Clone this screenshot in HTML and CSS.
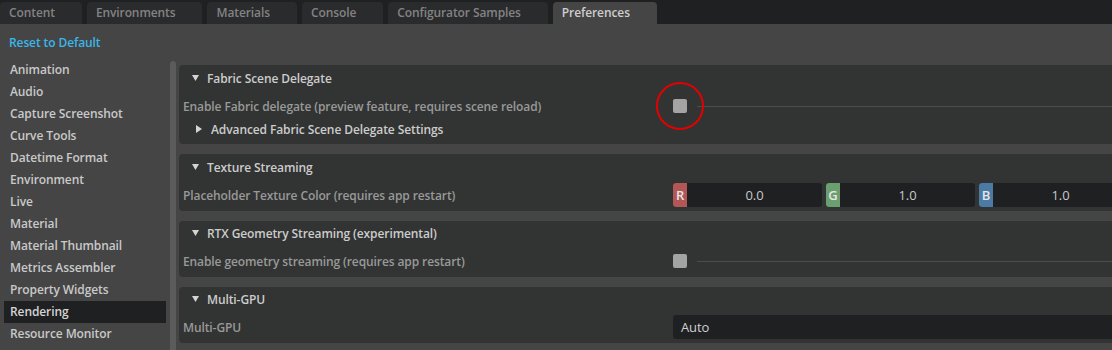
FILE: index.html
```html
<!DOCTYPE html>
<html>
<head>
<meta charset="utf-8">
<link rel="stylesheet" href="styles.css">
</head>
<body>
<div class="window">
  <div class="tabbar">
    <div class="tab">Content</div>
    <div class="tab">Environments</div>
    <div class="tab">Materials</div>
    <div class="tab">Console</div>
    <div class="tab">Configurator Samples</div>
    <div class="tab active">Preferences</div>
  </div>
  <div class="main">
    <div class="reset-bar"><span class="reset">Reset to Default</span></div>
    <div class="body">
      <ul class="pages">
        <li>Animation</li>
        <li>Audio</li>
        <li>Capture Screenshot</li>
        <li>Curve Tools</li>
        <li>Datetime Format</li>
        <li>Environment</li>
        <li>Live</li>
        <li>Material</li>
        <li>Material Thumbnail</li>
        <li>Metrics Assembler</li>
        <li>Property Widgets</li>
        <li class="selected">Rendering</li>
        <li>Resource Monitor</li>
      </ul>
      <div class="scrollbar"></div>
      <div class="content">
        <section class="frame">
          <div class="frame-header">
            <svg class="tri-down" width="7" height="6" viewBox="0 0 7 6"><polygon points="0,0 7,0 3.5,6" fill="#d4d4d4"/></svg>
            <span>Fabric Scene Delegate</span>
          </div>
          <div class="row">
            <span class="label">Enable Fabric delegate (preview feature, requires scene reload)</span>
            <div class="check-wrap">
              <span class="checkbox"></span>
              <span class="highlight"></span>
            </div>
            <span class="check-line"></span>
          </div>
          <div class="sub-header">
            <svg class="tri-right" width="6" height="8" viewBox="0 0 6 8"><polygon points="0,0 6,4 0,8" fill="#d4d4d4"/></svg>
            <span>Advanced Fabric Scene Delegate Settings</span>
          </div>
        </section>

        <section class="frame">
          <div class="frame-header">
            <svg class="tri-down" width="7" height="6" viewBox="0 0 7 6"><polygon points="0,0 7,0 3.5,6" fill="#d4d4d4"/></svg>
            <span>Texture Streaming</span>
          </div>
          <div class="row">
            <span class="label">Placeholder Texture Color (requires app restart)</span>
            <div class="color-fields">
              <div class="cfield"><span class="chan chan-r">R</span><span class="cval">0.0</span></div>
              <div class="cfield"><span class="chan chan-g">G</span><span class="cval">1.0</span></div>
              <div class="cfield"><span class="chan chan-b">B</span><span class="cval">1.0</span></div>
            </div>
          </div>
        </section>

        <section class="frame tight">
          <div class="frame-header">
            <svg class="tri-down" width="7" height="6" viewBox="0 0 7 6"><polygon points="0,0 7,0 3.5,6" fill="#d4d4d4"/></svg>
            <span>RTX Geometry Streaming (experimental)</span>
          </div>
          <div class="row">
            <span class="label">Enable geometry streaming (requires app restart)</span>
            <div class="check-wrap"><span class="checkbox"></span></div>
            <span class="check-line"></span>
          </div>
        </section>

        <section class="frame tight">
          <div class="frame-header">
            <svg class="tri-down" width="7" height="6" viewBox="0 0 7 6"><polygon points="0,0 7,0 3.5,6" fill="#d4d4d4"/></svg>
            <span>Multi-GPU</span>
          </div>
          <div class="row">
            <span class="label">Multi-GPU</span>
            <div class="combo">Auto</div>
          </div>
        </section>
      </div>
    </div>
  </div>
</div>
</body>
</html>
```

FILE: styles.css
```css
* { box-sizing: border-box; }

html, body {
  margin: 0;
  padding: 0;
  background: #454545;
  overflow: hidden;
}

body {
  width: 1112px;
  height: 350px;
  font-family: "Open Sans", "Noto Sans", sans-serif;
  font-weight: 600;
  font-size: 12px;
  letter-spacing: -0.1px;
}

.window {
  width: 1112px;
  height: 350px;
  overflow: hidden;
  display: flex;
  flex-direction: column;
}

.tabbar {
  height: 24px;
  background: #1f2022;
  display: flex;
  align-items: flex-end;
  gap: 5px;
  flex: none;
}

.tab {
  height: 22px;
  line-height: 22px;
  padding: 0 27px 0 9px;
  background: #2a2b2d;
  color: #838383;
  border-radius: 4px 4px 0 0;
  white-space: nowrap;
}

.tab.active {
  background: #454545;
  color: #cdcdcd;
}

.main {
  flex: 1;
  display: flex;
  flex-direction: column;
  min-height: 0;
}

.reset-bar {
  height: 35px;
  padding: 12px 0 0 9px;
  flex: none;
}

.reset {
  color: #3ab6ea;
  line-height: 14px;
  display: block;
}

.body {
  flex: 1;
  display: flex;
  min-height: 0;
}

.pages {
  list-style: none;
  margin: 0;
  padding: 0 4px;
  width: 170px;
  flex: none;
}

.pages li {
  height: 22px;
  line-height: 22px;
  padding-left: 6px;
  color: #c9c9c9;
  white-space: nowrap;
}

.pages li.selected {
  background: #1f2022;
  color: #d4d4d4;
}

.scrollbar {
  width: 6px;
  margin-top: 2px;
  background: #5b5b5b;
  border-radius: 3px 3px 0 0;
  flex: none;
}

.content {
  flex: 1;
  margin-left: 3px;
  margin-right: -12px;
  padding-top: 6px;
  display: flex;
  flex-direction: column;
  gap: 10px;
  min-width: 0;
}

.frame {
  background: #323433;
  border-radius: 4px;
  padding: 4px 0 4px 0;
}

.frame.tight {
  padding-top: 3px;
}

.frame-header {
  height: 18px;
  display: flex;
  align-items: center;
  color: #cccccc;
  padding-left: 13px;
}

.tri-down {
  margin-right: 8px;
  flex: none;
}

.row {
  margin-top: 7px;
  height: 24px;
  display: flex;
  align-items: center;
  padding-left: 4px;
}

.label {
  width: 490px;
  flex: none;
  color: #999999;
  white-space: nowrap;
}

.check-wrap {
  position: relative;
  width: 14px;
  height: 14px;
  flex: none;
}

.checkbox {
  display: block;
  width: 14px;
  height: 14px;
  background: #a4a4a4;
  border-radius: 2px;
}

.highlight {
  position: absolute;
  left: -17px;
  top: -17px;
  width: 48px;
  height: 48px;
  border: 2px solid #e40000;
  border-radius: 50%;
}

.check-line {
  flex: 1;
  height: 1px;
  margin-left: 10px;
  background: #4b4d4c;
}

.sub-header {
  height: 22px;
  display: flex;
  align-items: center;
  padding-left: 17px;
  color: #cccccc;
}

.tri-right {
  margin-right: 9px;
  flex: none;
}

.color-fields {
  display: flex;
  gap: 4px;
  flex: none;
}

.cfield {
  width: 149px;
  height: 24px;
  display: flex;
  background: #1f2022;
  border-radius: 3px;
  overflow: hidden;
}

.chan {
  width: 14px;
  flex: none;
  color: #e6e6e6;
  font-size: 13px;
  line-height: 24px;
  text-align: center;
}

.chan-r { background: #b25656; }
.chan-g { background: #6b9f6f; }
.chan-b { background: #4b7aa4; }

.cval {
  flex: 1;
  text-align: center;
  line-height: 24px;
  color: #c9c9c9;
  font-size: 13px;
  font-weight: 500;
}

.combo {
  flex: 1;
  height: 24px;
  line-height: 24px;
  background: #1f2022;
  border-radius: 3px;
  padding-left: 8px;
  color: #cfcfcf;
  font-size: 13px;
  font-weight: 500;
}
```
